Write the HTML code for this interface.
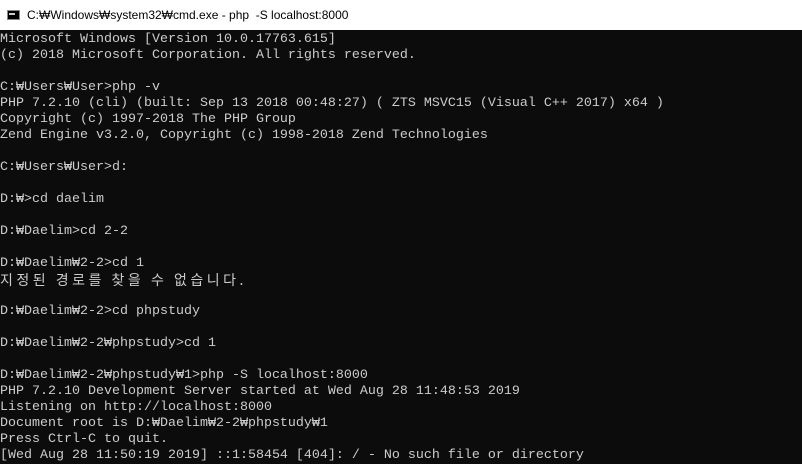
<!DOCTYPE html>
<html><head><meta charset="utf-8"><style>
html,body{margin:0;padding:0;width:802px;height:453px;overflow:hidden;background:#0c0c0c}
.title{position:absolute;left:0;top:0;width:802px;height:30px;background:#fff}
.title .t{position:absolute;left:27px;top:8px;font:12px "Liberation Sans",sans-serif;color:#000;white-space:pre}
.icon{position:absolute;left:7px;top:10px;width:13px;height:10px;background:#000;border:1px solid #888;box-sizing:border-box}
.icon:after{content:"";position:absolute;left:1px;top:2px;width:6px;height:2px;background:#ccc}
pre{position:absolute;left:0;top:32px;margin:0;font:13.33px/16px "Liberation Mono","DejaVu Sans Mono",monospace;color:#cccccc;white-space:pre}
.k{display:inline-block;height:16px;line-height:16px;vertical-align:top;font-family:"Noto Sans CJK KR","NanumGothic",sans-serif;font-size:14px;letter-spacing:3.5px}
</style></head><body>
<div class="title"><div class="icon"></div><div class="t">C:₩Windows₩system32₩cmd.exe - php  -S localhost:8000</div></div>
<pre>Microsoft Windows [Version 10.0.17763.615]
(c) 2018 Microsoft Corporation. All rights reserved.

C:₩Users₩User&gt;php -v
PHP 7.2.10 (cli) (built: Sep 13 2018 00:48:27) ( ZTS MSVC15 (Visual C++ 2017) x64 )
Copyright (c) 1997-2018 The PHP Group
Zend Engine v3.2.0, Copyright (c) 1998-2018 Zend Technologies

C:₩Users₩User&gt;d:

D:₩&gt;cd daelim

D:₩Daelim&gt;cd 2-2

D:₩Daelim₩2-2&gt;cd 1
<span class="k">지정된 경로를 찾을 수 없습니다.</span>

D:₩Daelim₩2-2&gt;cd phpstudy

D:₩Daelim₩2-2₩phpstudy&gt;cd 1

D:₩Daelim₩2-2₩phpstudy₩1&gt;php -S localhost:8000
PHP 7.2.10 Development Server started at Wed Aug 28 11:48:53 2019
Listening on http://localhost:8000
Document root is D:₩Daelim₩2-2₩phpstudy₩1
Press Ctrl-C to quit.
[Wed Aug 28 11:50:19 2019] ::1:58454 [404]: / - No such file or directory</pre>
</body></html>
